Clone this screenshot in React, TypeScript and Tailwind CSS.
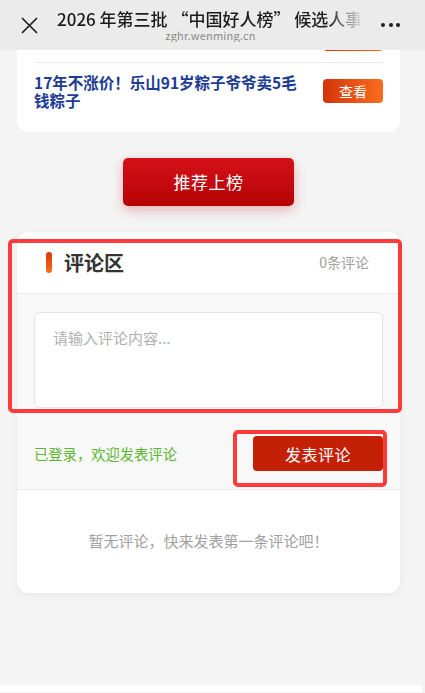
import React from "react";

export default function App() {
  return (
    <div
      className="relative w-[425px] h-[693px] overflow-hidden bg-[#f4f4f4]"
      style={{ fontFamily: '"Noto Sans CJK SC", "Noto Sans", sans-serif' }}
    >
      {/* top nav bar (overlays content) */}
      <div className="absolute top-0 left-0 right-0 z-10 h-[50px] bg-[#ebebeb] flex items-center">
        <div className="w-[57px] flex items-center justify-center pl-[1px]">
          <svg width="17" height="17" viewBox="0 0 17 17" fill="none">
            <path d="M1.5 1.5L15.5 15.5M15.5 1.5L1.5 15.5" stroke="#1f1f1f" strokeWidth="1.7" strokeLinecap="round" />
          </svg>
        </div>
        <div className="w-[307px] flex flex-col items-center overflow-hidden">
          <div className="w-full whitespace-nowrap overflow-hidden text-[17px] leading-[21px] font-medium text-[#1c1c1c] [mask-image:linear-gradient(to_right,black_88%,transparent_100%)]">
            2026 年第三批 “中国好人榜” 候选人事迹
          </div>
          <div className="text-[11px] leading-[13px] text-[#8a8a8a] tracking-[0.2px]">zghr.wenming.cn</div>
        </div>
        <div className="flex items-center gap-[3.5px] ml-[17px]">
          <span className="w-[4px] h-[4px] rounded-full bg-[#1f1f1f]" />
          <span className="w-[4px] h-[4px] rounded-full bg-[#1f1f1f]" />
          <span className="w-[4px] h-[4px] rounded-full bg-[#1f1f1f]" />
        </div>
      </div>

      {/* page content */}
      <div className="flex flex-col pl-[17px] pr-[25px]">
        {/* news list card */}
        <div className="bg-white rounded-b-xl px-[17px]">
          <div className="h-[63px] flex items-end justify-end pb-[11px] border-b border-[#e9e9e9]">
            <div className="w-[60px] h-[24px] rounded-[4px] bg-gradient-to-r from-[#d8360a] to-[#f86a1e]" />
          </div>
          <div className="flex items-center justify-between pt-[10px] pb-[23px]">
            <div className="text-[15.5px] leading-[18px] font-bold text-[#1d3c95]">
              17年不涨价！乐山91岁粽子爷爷卖5毛
              <br />
              钱粽子
            </div>
            <div className="w-[60px] h-[24px] rounded-[4px] bg-gradient-to-r from-[#d33408] to-[#f96c1f] flex items-center justify-center text-white text-[14px] leading-none">
              查看
            </div>
          </div>
        </div>

        {/* recommend button */}
        <div className="self-center mt-[26px] w-[171px] h-[48px] rounded-[5px] bg-gradient-to-b from-[#d5111a] to-[#b50303] shadow-[0_4px_12px_rgba(200,20,20,0.3)] flex items-center justify-center text-white text-[17px] tracking-[0.5px]">
          推荐上榜
        </div>

        {/* comments card */}
        <div className="mt-[26px] bg-white rounded-xl overflow-hidden shadow-[0_2px_10px_rgba(0,0,0,0.05)]">
          <div className="h-[62px] flex items-center justify-between pl-[29px] pr-[31px] border-b border-[#ededed]">
            <div className="flex items-center gap-[12px]">
              <span className="w-[6px] h-[21px] rounded-full bg-gradient-to-b from-[#d93412] to-[#f67017]" />
              <span className="text-[20px] leading-none font-bold text-[#333333]">评论区</span>
            </div>
            <span className="text-[14px] text-[#a0a0a0]">0条评论</span>
          </div>
          <div className="bg-[#f8f8f8] px-[17px] pt-[18px] pb-[18px] border-b border-[#ececec]">
            <div className="h-[96px] bg-white border border-[#e3e3e3] rounded-[6px] px-[18px] pt-[16px] text-[15px] leading-[18px] text-[#b0b0b0]">
              请输入评论内容...
            </div>
            <div className="mt-[28px] flex items-center justify-between">
              <span className="text-[14.3px] text-[#5cb531]">已登录，欢迎发表评论</span>
              <div className="w-[130px] h-[35px] rounded-[4px] bg-[#c42005] flex items-center justify-center text-white text-[16px] tracking-[0.5px]">
                发表评论
              </div>
            </div>
          </div>
          <div className="h-[103px] flex items-center justify-center text-[15px] text-[#a0a0a0]">
            暂无评论，快来发表第一条评论吧！
          </div>
        </div>

        <div className="mt-[92px] -ml-[17px] w-[422px] h-[7px] bg-white" />
      </div>

      {/* annotation boxes */}
      <div className="absolute left-[8px] top-[239px] w-[394px] h-[174px] border-[4px] border-[#fe3b3b] rounded-[5px]" />
      <div className="absolute left-[233px] top-[430px] w-[154px] h-[57px] border-[4px] border-[#fe3b3b] rounded-[5px]" />
    </div>
  );
}
